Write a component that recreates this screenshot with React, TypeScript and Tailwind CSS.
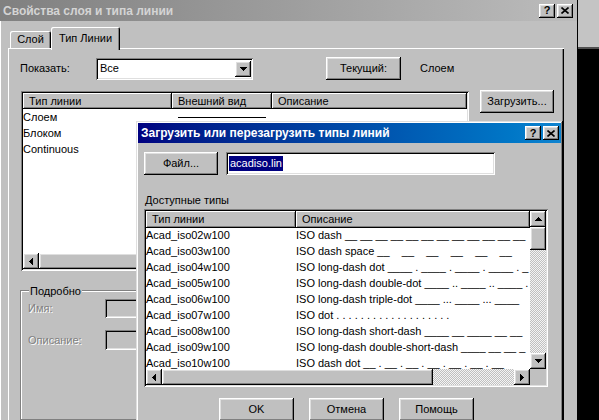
import React from "react";

const raised =
  "shadow-[inset_-1px_-1px_0_#000,inset_1px_1px_0_#fff,inset_-2px_-2px_0_#808080,inset_2px_2px_0_#dfdfdf]";
const sunken =
  "shadow-[inset_1px_1px_0_#808080,inset_-1px_-1px_0_#fff,inset_2px_2px_0_#000,inset_-2px_-2px_0_#dfdfdf]";
const frame =
  "shadow-[inset_-1px_-1px_0_#000,inset_1px_1px_0_#dfdfdf,inset_-2px_-2px_0_#808080,inset_2px_2px_0_#fff]";
const headerCell =
  "shadow-[inset_-1px_-1px_0_#000,inset_1px_1px_0_#fff,inset_-2px_-2px_0_#808080]";
const checker =
  "bg-[repeating-conic-gradient(#c0c0c0_0%_25%,#f4f4f4_0%_50%)] bg-size-[2px_2px]";

const Arrow = ({ dir }: { dir: "up" | "down" | "left" | "right" }) => {
  const pts = {
    up: "3.5,0 7,4 0,4",
    down: "0,0 7,0 3.5,4",
    left: "4,0 4,7 0,3.5",
    right: "0,0 0,7 4,3.5",
  }[dir];
  const vertical = dir === "up" || dir === "down";
  return (
    <svg
      width={vertical ? 7 : 4}
      height={vertical ? 4 : 7}
      viewBox={vertical ? "0 0 7 4" : "0 0 4 7"}
      shapeRendering="crispEdges"
    >
      <polygon points={pts} fill="#000" />
    </svg>
  );
};

const ScrollBtn = ({ dir }: { dir: "up" | "down" | "left" | "right" }) => (
  <div className={`w-[16px] h-[16px] shrink-0 bg-[#c0c0c0] flex items-center justify-center ${raised}`}>
    <Arrow dir={dir} />
  </div>
);

const TitleBtn = ({ kind }: { kind: "help" | "close" }) => (
  <div className={`w-[16px] h-[14px] bg-[#c0c0c0] flex items-center justify-center ${raised}`}>
    {kind === "help" ? (
      <span className="font-bold text-[11px] leading-none text-black">?</span>
    ) : (
      <svg width="8" height="7" viewBox="0 0 8 7">
        <path d="M0.5 0.5 L7.5 6.5 M7.5 0.5 L0.5 6.5" stroke="#000" strokeWidth="1.6" />
      </svg>
    )}
  </div>
);

const Button = ({ label, className = "" }: { label: string; className?: string }) => (
  <div className={`h-[23px] bg-[#c0c0c0] flex items-center justify-center ${raised} ${className}`}>
    {label}
  </div>
);

const linetypes = [
  ["Acad_iso02w100", "ISO dash __ __ __ __ __ __ __ __ __ __ __ __"],
  ["Acad_iso03w100", "ISO dash space __    __    __    __    __    __"],
  ["Acad_iso04w100", "ISO long-dash dot ____ . ____ . ____ . ____ . _"],
  ["Acad_iso05w100", "ISO long-dash double-dot ____ .. ____ .. ____ ."],
  ["Acad_iso06w100", "ISO long-dash triple-dot ____ ... ____ ... ____"],
  ["Acad_iso07w100", "ISO dot . . . . . . . . . . . . . . . . . . ."],
  ["Acad_iso08w100", "ISO long-dash short-dash ____ __ ____ __ __"],
  ["Acad_iso09w100", "ISO long-dash double-short-dash ____ __ __ _"],
  ["Acad_iso10w100", "ISO dash dot __ . __ . __ . __ . __ . __ . __"],
];

const LoadDialog = () => (
  <div className={`absolute left-[136px] top-[121px] w-[427px] h-[320px] bg-[#c0c0c0] p-[2px] flex flex-col ${frame}`}>
    <div className="h-[20px] shrink-0 flex items-center bg-linear-to-r from-[#000080] to-[#1084d0] pl-[3px] pr-[2px]">
      <span className="font-bold text-white text-[12px]">Загрузить или перезагрузить типы линий</span>
      <div className="ml-auto flex gap-[2px]">
        <TitleBtn kind="help" />
        <TitleBtn kind="close" />
      </div>
    </div>
    <div className="pl-[6px] flex flex-col">
      <div className="flex mt-[9px]">
        <Button label="Файл..." className="w-[74px]" />
        <div className={`ml-[8px] w-[269px] h-[23px] bg-white flex items-center pl-[3px] ${sunken}`}>
          <span className="bg-[#000080] text-white leading-[15px] px-[1px]">acadiso.lin</span>
        </div>
      </div>
      <div className="mt-[19px] h-[13px] leading-[13px] pl-[1px]">Доступные типы</div>
      <div className={`mt-[2px] w-[404px] h-[178px] bg-white p-[2px] ${sunken}`}>
        <div className="grid grid-cols-[1fr_16px] grid-rows-[1fr_16px] w-full h-full">
          <div className="overflow-hidden flex flex-col">
            <div className="flex h-[17px] shrink-0">
              <div className={`w-[150px] bg-[#c0c0c0] pl-[6px] flex items-center ${headerCell}`}>Тип линии</div>
              <div className={`flex-1 bg-[#c0c0c0] pl-[6px] flex items-center ${headerCell}`}>Описание</div>
            </div>
            {linetypes.map(([name, desc]) => (
              <div key={name} className="flex h-[16px] shrink-0 items-start leading-[14px] whitespace-pre">
                <div className="w-[150px] shrink-0">{name}</div>
                <div className="whitespace-pre">{desc}</div>
              </div>
            ))}
          </div>
          <div className="flex flex-col">
            <ScrollBtn dir="up" />
            <div className={`h-[23px] bg-[#c0c0c0] ${raised}`} />
            <div className={`flex-1 ${checker}`} />
            <ScrollBtn dir="down" />
          </div>
          <div className="flex">
            <ScrollBtn dir="left" />
            <div className={`w-[271px] bg-[#c0c0c0] ${raised}`} />
            <div className={`flex-1 ${checker}`} />
            <ScrollBtn dir="right" />
          </div>
          <div className="bg-[#c0c0c0]" />
        </div>
      </div>
      <div className="flex gap-[15px] mt-[11px] ml-[75px]">
        <Button label="OK" className="w-[75px]" />
        <Button label="Отмена" className="w-[75px]" />
        <Button label="Помощь" className="w-[75px]" />
      </div>
    </div>
  </div>
);

export default function App() {
  return (
    <div className="relative w-[599px] h-[420px] overflow-hidden bg-black flex text-[11px] text-black [font-family:'Liberation_Sans',Arial,sans-serif]">
      <div className="w-[578px] h-full bg-[#c0c0c0] flex flex-col border-r border-black shadow-[inset_1px_0_0_#fff]">
        <div className="h-[21px] shrink-0 flex items-center bg-linear-to-r from-[#808080] to-[#bcbcbc] pl-[3px] pr-[4px]">
          <span className="font-bold text-[#d4d4d4] text-[12px]">Свойства слоя и типа линии</span>
          <div className="ml-auto flex gap-[2px]">
            <TitleBtn kind="help" />
            <TitleBtn kind="close" />
          </div>
        </div>
        <div className="flex-1 flex flex-col pl-[8px] pr-[13px]">
          <div className="h-[21px] mt-[6px] flex items-end relative z-10">
            <div className="ml-[2px] w-[41px] h-[17px] rounded-t-[2px] flex items-center justify-center shadow-[inset_1px_1px_0_#fff,inset_-1px_0_0_#000,inset_-2px_0_0_#808080]">
              Слой
            </div>
            <div className="w-[69px] h-[23px] -mb-[2px] bg-[#c0c0c0] rounded-t-[2px] flex items-start pt-[3px] justify-center shadow-[inset_1px_1px_0_#fff,inset_-1px_0_0_#000,inset_-2px_0_0_#808080]">
              Тип Линии
            </div>
          </div>
          <div className="flex-1 flex flex-col pl-[12px] shadow-[inset_1px_1px_0_#fff,inset_-1px_0_0_#000,inset_-2px_0_0_#808080]">
            <div className="flex items-center mt-[9px] h-[23px]">
              <div className="w-[76px]">Показать:</div>
              <div className={`w-[157px] h-[22px] bg-white flex items-center p-[2px] ${sunken}`}>
                <span className="flex-1 pl-[2px]">Все</span>
                <ScrollBtn dir="down" />
              </div>
              <Button label="Текущий:" className="ml-[73px] w-[75px]" />
              <span className="ml-[19px]">Слоем</span>
            </div>
            <div className="flex mt-[11px]">
              <div className={`ml-[1px] w-[448px] h-[180px] bg-white p-[2px] flex flex-col ${sunken}`}>
                <div className="flex h-[16px] shrink-0">
                  <div className={`w-[149px] bg-[#c0c0c0] pl-[6px] flex items-center ${headerCell}`}>Тип линии</div>
                  <div className={`w-[100px] bg-[#c0c0c0] pl-[6px] flex items-center ${headerCell}`}>Внешний вид</div>
                  <div className={`flex-1 bg-[#c0c0c0] pl-[6px] flex items-center ${headerCell}`}>Описание</div>
                </div>
                <div className="flex-1 flex flex-col">
                  <div className="flex h-[16px] items-center">
                    <div className="w-[149px]">Слоем</div>
                    <div className="w-[100px] flex justify-center">
                      <div className="w-[88px] h-px bg-black" />
                    </div>
                  </div>
                  <div className="h-[16px] flex items-center">Блоком</div>
                  <div className="h-[16px] flex items-center">Continuous</div>
                </div>
                <div className="flex h-[16px] shrink-0">
                  <ScrollBtn dir="left" />
                  <div className={`flex-1 bg-[#c0c0c0] ${raised}`} />
                </div>
              </div>
              <Button label="Загрузить..." className="ml-[11px] -mt-[1px] w-[74px]" />
            </div>
            <div className="relative mt-[19px] w-[470px] flex-1 border border-[#808080] shadow-[1px_1px_0_#fff,inset_1px_1px_0_#fff] pl-[7px] pt-[8px]">
              <span className="absolute -top-[8px] left-[8px] px-[1px] bg-[#c0c0c0]">Подробно</span>
              <div className="flex items-center h-[19px]">
                <span className="w-[77px] text-[#808080] [text-shadow:1px_1px_0_#fff]">Имя:</span>
                <div className={`w-[200px] h-[19px] bg-[#c0c0c0] ${sunken}`} />
              </div>
              <div className="flex items-center h-[20px] mt-[12px]">
                <span className="w-[77px] text-[#808080] [text-shadow:1px_1px_0_#fff]">Описание:</span>
                <div className={`w-[200px] h-[20px] bg-[#c0c0c0] ${sunken}`} />
              </div>
            </div>
          </div>
        </div>
      </div>
      <div className="w-[21px] flex flex-col">
        <div className="h-[49px] bg-[#c4c4c4] border-b-2 border-[#505050]" />
        <div className="flex-1 bg-black" />
      </div>
      <LoadDialog />
    </div>
  );
}
